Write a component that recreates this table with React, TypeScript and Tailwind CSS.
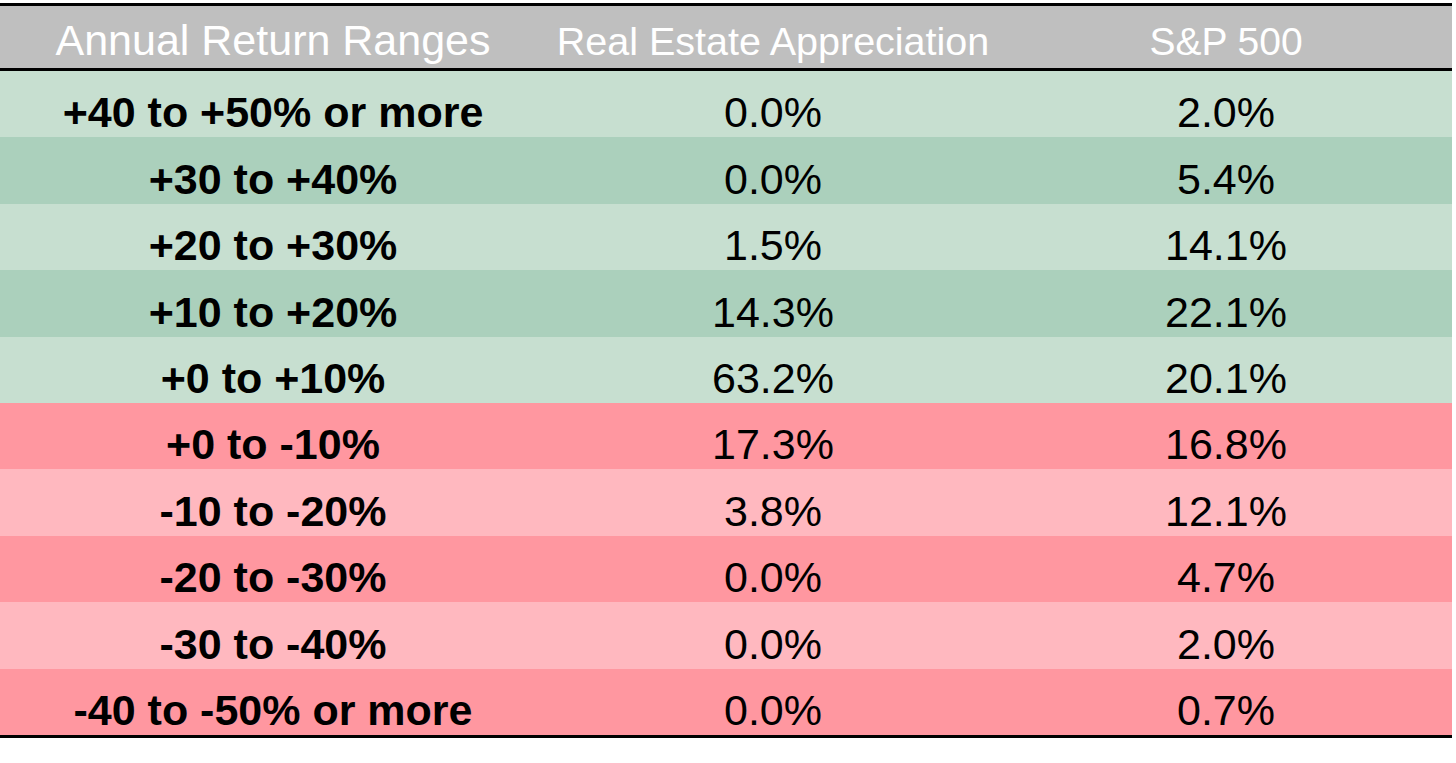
import React from 'react';

const rows = [
  { range: '+40 to +50% or more', re: '0.0%', sp: '2.0%', bg: 'bg-[#c7dfd0]' },
  { range: '+30 to +40%', re: '0.0%', sp: '5.4%', bg: 'bg-[#abd0bc]' },
  { range: '+20 to +30%', re: '1.5%', sp: '14.1%', bg: 'bg-[#c7dfd0]' },
  { range: '+10 to +20%', re: '14.3%', sp: '22.1%', bg: 'bg-[#abd0bc]' },
  { range: '+0 to +10%', re: '63.2%', sp: '20.1%', bg: 'bg-[#c7dfd0]' },
  { range: '+0 to -10%', re: '17.3%', sp: '16.8%', bg: 'bg-[#ff97a0]' },
  { range: '-10 to -20%', re: '3.8%', sp: '12.1%', bg: 'bg-[#ffb8bf]' },
  { range: '-20 to -30%', re: '0.0%', sp: '4.7%', bg: 'bg-[#ff97a0]' },
  { range: '-30 to -40%', re: '0.0%', sp: '2.0%', bg: 'bg-[#ffb8bf]' },
  { range: '-40 to -50% or more', re: '0.0%', sp: '0.7%', bg: 'bg-[#ff97a0]' },
];

const cols = 'grid grid-cols-[546px_454px_452px]';

export default function App() {
  return (
    <div className="w-[1456px] h-[763px] bg-white pt-[3px] font-['Liberation_Sans',Arial,sans-serif] text-[43px]">
      <div className="w-[1452px] border-t-[3px] border-b-[3px] border-black">
        <div className={`${cols} h-[65px] bg-[#bfbfbf] text-white border-b-[3px] border-black`}>
          <div className="flex items-end justify-center pb-[4px] leading-[48px] whitespace-nowrap text-[43px]">Annual Return Ranges</div>
          <div className="flex items-end justify-center pb-[3px] leading-[48px] whitespace-nowrap text-[39.5px]">Real Estate Appreciation</div>
          <div className="flex items-end justify-center pb-[2px] leading-[48px] whitespace-nowrap text-[39px]">S&amp;P 500</div>
        </div>
        {rows.map((r) => (
          <div key={r.range} className={`${cols} h-[66.4px] ${r.bg} text-black`}>
            <div className="flex items-end justify-center pb-[1px] leading-[48px] font-bold whitespace-nowrap">{r.range}</div>
            <div className="flex items-end justify-center pb-[1px] leading-[48px] whitespace-nowrap">{r.re}</div>
            <div className="flex items-end justify-center pb-[1px] leading-[48px] whitespace-nowrap">{r.sp}</div>
          </div>
        ))}
      </div>
    </div>
  );
}
